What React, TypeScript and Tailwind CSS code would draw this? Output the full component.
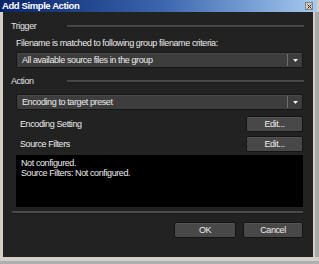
import React from "react";

const font = { fontFamily: '"Liberation Sans", Arial, sans-serif' };
const txt = "text-[9px] tracking-[-0.4px] leading-none";

function Dropdown({ text }: { text: string }) {
  return (
    <div className="flex h-[16px] items-stretch rounded-[2px] border border-[#161616] bg-[#3d3d3d] shadow-[inset_0_1px_0_#4a4a4a]">
      <div className={`flex flex-1 items-center pl-[5px] ${txt} text-[#ececec]`}>{text}</div>
      <div className="my-[1px] w-[1px] bg-[#6e6e6e]" />
      <div className="flex w-[14px] items-center justify-center">
        <svg width="5" height="3" viewBox="0 0 5 3">
          <path d="M0 0 H5 L2.5 3 Z" fill="#f0f0f0" />
        </svg>
      </div>
    </div>
  );
}

function Btn({ children, w }: { children: React.ReactNode; w: string }) {
  return (
    <div
      className={`flex h-[16px] ${w} items-center justify-center rounded-[2px] border border-[#141414] bg-[#484848] ${txt} text-[#ececec] shadow-[inset_0_1px_0_#545454]`}
    >
      {children}
    </div>
  );
}

function Header({ text }: { text: string }) {
  return (
    <div className="flex h-[12px] items-center pl-[8px] pr-[9px]">
      <span className={`w-[56px] ${txt} text-[#e2e2e2]`}>{text}</span>
      <div className="h-[2px] flex-1 bg-[#474747] shadow-[0_1px_0_#1a1a1a]" />
    </div>
  );
}

export default function App() {
  return (
    <div style={font} className="flex h-[264px] w-[319px] flex-col bg-[#d4d0c8]">
      <div className="mr-[2px] flex h-[12px] items-center justify-between bg-gradient-to-r from-[#0a246a] via-[#3a64ac] to-[#a6caf0] pl-[2px] pr-[4px]">
        <span className="text-[9.5px] font-bold leading-none tracking-[-0.4px] text-white">Add Simple Action</span>
        <div className="flex h-[8px] w-[8px] items-center justify-center border border-[#808080] bg-[#d4d0c8]">
          <svg width="5" height="5" viewBox="0 0 5 5">
            <path d="M0.5 0.5 L4.5 4.5 M4.5 0.5 L0.5 4.5" stroke="#222" strokeWidth="1" />
          </svg>
        </div>
      </div>
      <div className="flex h-[245px]">
        <div className="ml-[3px] flex h-[245px] flex-1 flex-col bg-[#222222] pt-[8px]">
          <Header text="Trigger" />
          <div className={`mt-[5px] flex h-[12px] items-center pl-[13px] ${txt} text-[#ececec]`}>
            Filename is matched to following group filename criteria:
          </div>
          <div className="mt-[3px] pl-[13px] pr-[10px]">
            <Dropdown text="All available source files in the group" />
          </div>
          <div className="mt-[7px]">
            <Header text="Action" />
          </div>
          <div className="mt-[7px] pl-[13px] pr-[10px]">
            <Dropdown text="Encoding to target preset" />
          </div>
          <div className="mt-[6px] flex items-center justify-between pl-[17px] pr-[10px]">
            <span className={`${txt} text-[#ececec]`}>Encoding Setting</span>
            <Btn w="w-[57px]">Edit...</Btn>
          </div>
          <div className="mt-[4px] flex items-center justify-between pl-[17px] pr-[10px]">
            <span className={`${txt} text-[#ececec]`}>Source Filters</span>
            <Btn w="w-[57px]">Edit...</Btn>
          </div>
          <div className="ml-[13px] mr-[10px] mt-[3px] h-[52px] bg-black px-[5px] pt-[3px] text-[9px] leading-[10px] tracking-[-0.4px] text-[#ececec]">
            <div>Not configured.</div>
            <div>Source Filters: Not configured.</div>
          </div>
          <div className="ml-[9px] mr-[10px] mt-[4px] h-[2px] bg-[#4a4a4a] shadow-[0_1px_0_#1a1a1a]" />
          <div className="mt-[9px] flex justify-end gap-[7px] pr-[10px]">
            <Btn w="w-[62px]">OK</Btn>
            <Btn w="w-[60px]">Cancel</Btn>
          </div>
        </div>
        <div className="w-[2px] bg-[#d4d0c8]" />
        <div className="w-[4px] bg-[#a8a8a8]" />
      </div>
      <div className="mr-[4px] h-[4px] bg-[#d4d0c8]" />
      <div className="flex-1 bg-[#b0b0b0]" />
    </div>
  );
}
